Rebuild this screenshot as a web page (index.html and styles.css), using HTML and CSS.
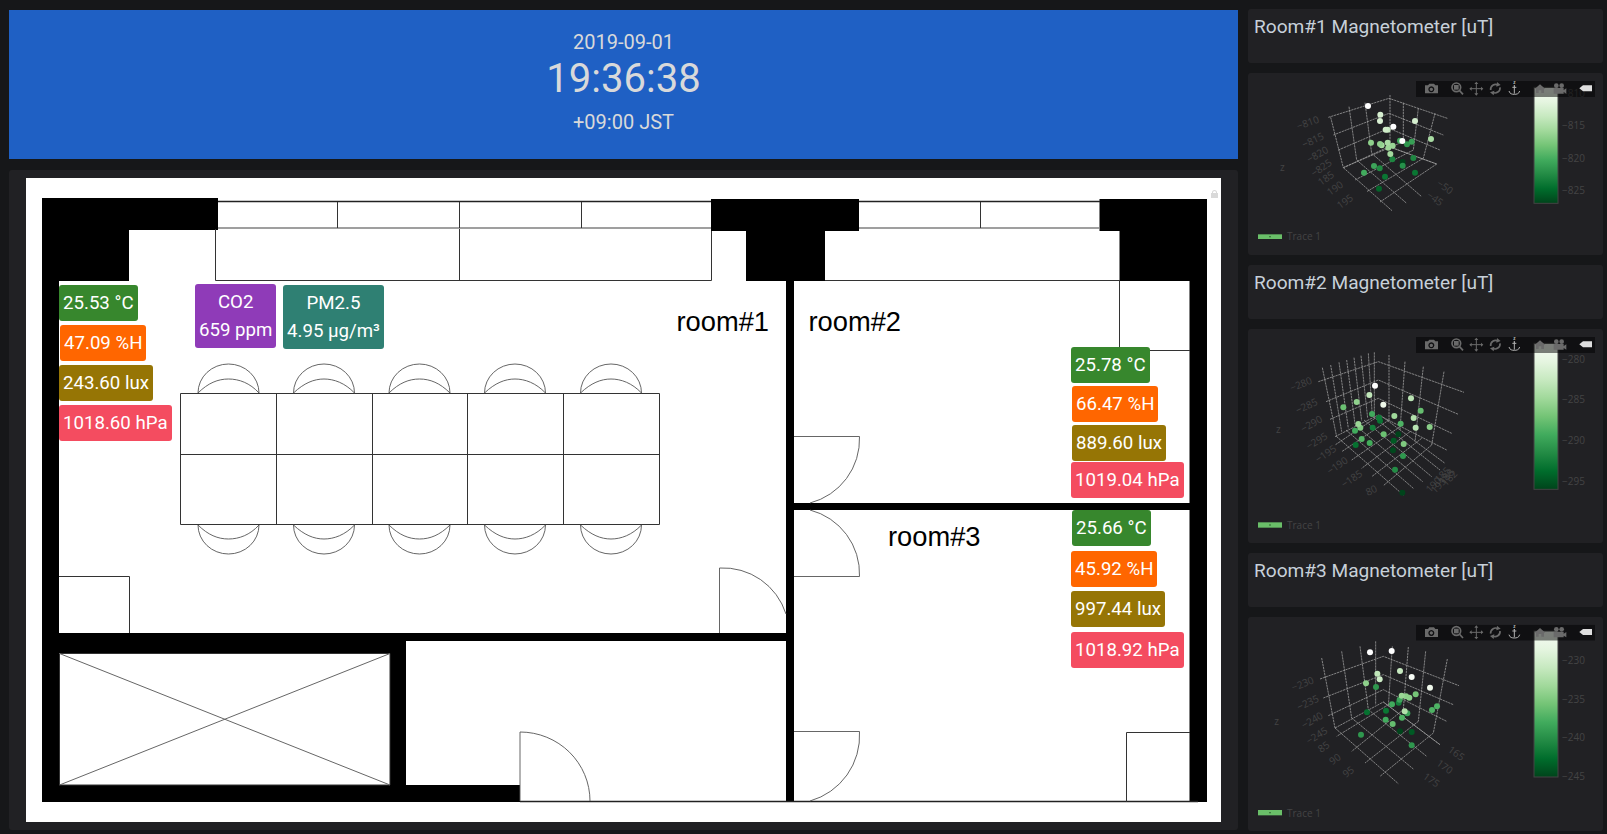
FILE: index.html
```html
<!DOCTYPE html>
<html lang="en">
<head>
<meta charset="utf-8">
<title>Dashboard</title>
<link rel="stylesheet" href="styles.css">
</head>
<body>
<svg class="defs" width="0" height="0" aria-hidden="true">
  <defs>
    <linearGradient id="greens" x1="0" y1="0" x2="0" y2="1">
      <stop offset="0" stop-color="#f7fcf5"/>
      <stop offset=".125" stop-color="#e5f5e0"/>
      <stop offset=".25" stop-color="#c7e9c0"/>
      <stop offset=".375" stop-color="#a1d99b"/>
      <stop offset=".5" stop-color="#74c476"/>
      <stop offset=".625" stop-color="#41ab5d"/>
      <stop offset=".75" stop-color="#238b45"/>
      <stop offset=".875" stop-color="#006d2c"/>
      <stop offset="1" stop-color="#00441b"/>
    </linearGradient>
    <symbol id="toolbar" viewBox="0 0 537 48" width="537" height="48">
      <rect width="537" height="48" fill="#000" fill-opacity=".5"/>
      <path class="ico" fill-rule="evenodd" d="M27 13h9l4-5h14l4 5h8v24H27zM46 16a9 9 0 1 0 .01 0zM46 20a5 5 0 1 1-.01 0z"/>
      <circle class="ico-line" cx="121" cy="19" r="13"/>
      <rect class="ico" x="114" y="12" width="14" height="14"/>
      <path class="ico-line" d="M130 28l11 12"/>
      <path class="ico-line thin" d="M181 5v36M163 23h36"/>
      <path class="ico" d="M181 2l6 7h-12zM181 44l6-7h-12zM160 23l7-6v12zM202 23l-7-6v12z"/>
      <path class="ico-line" d="M224 27a15 15 0 0 1 22-15M252 19a15 15 0 0 1-22 15"/>
      <path class="ico" d="M243 3l11 9-13 5zM233 43l-11-9 13-5z"/>
      <text class="ico-z" x="295" y="10">z</text>
      <path class="anchor" d="M295 13v25M289 19h12M279 30c2 9 10 10 16 10s14-1 16-10"/>
      <circle class="anchor-hub" cx="295" cy="15" r="2"/>
      <path class="ico" d="M372 10l16 14h-4v12h-8v-8h-8v8h-8V24h-4z"/>
      <circle class="ico" cx="421" cy="14" r="7"/>
      <circle class="ico" cx="437" cy="14" r="7"/>
      <path class="ico" d="M413 21h30v6l8-5v16l-8-5v5h-30z"/>
      <path class="tag" d="M490 22l11-9h27v18h-27z"/>
    </symbol>
  </defs>
</svg>

<div class="dash">
  <div class="col-left">
    <section class="panel clock">
      <div class="clock-date">2019-09-01</div>
      <div class="clock-time">19:36:38</div>
      <div class="clock-zone">+09:00 JST</div>
    </section>

    <section class="panel floor-panel">
      <div class="floor">
        <svg class="plan" viewBox="26 178 1195 644" width="1195" height="644">
          <path class="wall" d="M42 198H218V230H129V281H59V802H42Z"/>
          <path class="wall" d="M711 199H859V231H825V281H794V802H786V281H746V231H711Z"/>
          <path class="wall" d="M1099.500 199H1207V802H1189.500V281H1119.500V231H1099.500Z"/>
          <rect class="wall" x="794" y="503" width="396" height="7"/>
          <path class="wall" d="M59 633H786V641H406V785H520V802H42V785H390V653H59Z"/>

          <path class="ln-dark" d="M218 201.500H711M859 201.500H1100M520 801.500H1198"/>
          <path class="ln-gray" d="M218 228H711M859 228H1100"/>
          <path class="ln" d="M337.500 202V228M459.500 202V228M581.500 202V228M980.500 202V228"/>
          <path class="ln" d="M215.500 229V280.500H711.500V231M459.500 229V280.500"/>
          <path class="ln" d="M825 280.500H1120M1119.500 281V350.500H1190"/>
          <path class="ln" d="M59 576.500H129.500V633"/>
          <path class="ln" d="M1126.500 802V732.500H1190"/>
          <path class="ln" d="M180.500 393.500H659.500V524.500H180.500ZM180.500 454.500H659.500M276.500 393.500V524.500M372.500 393.500V524.500M467.500 393.500V524.500M563.500 393.500V524.500"/>

          <g class="arc">
            <path d="M198 393A30.500 29 0 0 1 259 393M198 393C208 383 218 379 228.500 379S250 383 259 393"/>
            <path d="M293.500 393A30.500 29 0 0 1 354.500 393M293.500 393C304 383 314 379 324 379S345 383 354.500 393"/>
            <path d="M389 393A30.500 29 0 0 1 450 393M389 393C399 383 409 379 419.500 379S440 383 450 393"/>
            <path d="M484.500 393A30.500 29 0 0 1 545.500 393M484.500 393C495 383 505 379 515 379S536 383 545.500 393"/>
            <path d="M580.500 393A30.500 29 0 0 1 641.500 393M580.500 393C591 383 601 379 611 379S632 383 641.500 393"/>
            <path d="M198 525A30.500 29 0 0 0 259 525M198 525C208 535 218 539 228.500 539S250 535 259 525"/>
            <path d="M293.500 525A30.500 29 0 0 0 354.500 525M293.500 525C304 535 314 539 324 539S345 535 354.500 525"/>
            <path d="M389 525A30.500 29 0 0 0 450 525M389 525C399 535 409 539 419.500 539S440 535 450 525"/>
            <path d="M484.500 525A30.500 29 0 0 0 545.500 525M484.500 525C495 535 505 539 515 539S536 535 545.500 525"/>
            <path d="M580.500 525A30.500 29 0 0 0 641.500 525M580.500 525C591 535 601 539 611 539S632 535 641.500 525"/>
            <path d="M794 436.500H859.500A66 66 0 0 1 810 503"/>
            <path d="M794 576.500H859.500A66 66 0 0 0 810 510"/>
            <path d="M794 731.500H859.500A68 68 0 0 1 810 801"/>
            <path d="M719.500 633V568A66 66 0 0 1 786 614"/>
            <path d="M520 801V732A70 69 0 0 1 590 801"/>
          </g>

          <path class="ln" d="M59.500 653.500H390V785H59.500Z"/>
          <path class="ln-diag" d="M59.500 653.500L390 785M390 653.500L59.500 785"/>

          <text class="room" x="676.500" y="331">room#1</text>
          <text class="room" x="808.500" y="331">room#2</text>
          <text class="room" x="888" y="546">room#3</text>

          <path class="lock" d="M1212 193v-.5a2.500 2.500 0 0 1 5 0v.5h1v5h-7v-5zM1213 193h3v-.5a1.500 1.500 0 0 0-3 0z"/>
        </svg>

        <div class="tag-pin t-green r1-t">25.53 °C</div>
        <div class="tag-pin t-orange r1-h">47.09 %H</div>
        <div class="tag-pin t-olive r1-l">243.60 lux</div>
        <div class="tag-pin t-red r1-p">1018.60 hPa</div>
        <div class="tag-pin two t-purple r1-c">CO2<br>659 ppm</div>
        <div class="tag-pin two t-teal r1-m">PM2.5<br>4.95 µg/m³</div>

        <div class="tag-pin t-green r2-t">25.78 °C</div>
        <div class="tag-pin t-orange r2-h">66.47 %H</div>
        <div class="tag-pin t-olive r2-l">889.60 lux</div>
        <div class="tag-pin t-red r2-p">1019.04 hPa</div>

        <div class="tag-pin t-green r3-t">25.66 °C</div>
        <div class="tag-pin t-orange r3-h">45.92 %H</div>
        <div class="tag-pin t-olive r3-l">997.44 lux</div>
        <div class="tag-pin t-red r3-p">1018.92 hPa</div>
      </div>
    </section>
  </div>

  <div class="col-right">
    <section class="panel title-panel"><h2 class="title">Room#1 Magnetometer [uT]</h2></section>
    <section class="panel plot plot-short">
      <svg viewBox="24 219 1065 546" width="355" height="182">
        <g class="grid">
          <path d="M265 352L447 295L622 355M280 405L447 340L610 405M295 450L447 385L600 450M310 503L447 440L590 492"/>
          <path d="M272 352L310 503M327 320L350 480M375 308L395 460M450 285L450 440M490 308L490 425M535 325L520 450M585 340L550 475"/>
          <path d="M310 503L456 632M350 480L500 610M395 460L545 590M447 440L590 492M590 492L420 606M550 475L380 575M520 450L345 540M490 425L310 503"/>
        </g>
        <g class="dots">
          <circle cx="417" cy="566" fill="#036429"/><circle cx="435" cy="530" fill="#0a7633"/><circle cx="525" cy="518" fill="#0a7633"/>
          <circle cx="372" cy="518" fill="#41ab5d"/><circle cx="419" cy="505" fill="#1f8a42"/><circle cx="402" cy="498" fill="#3da35a"/>
          <circle cx="488" cy="486" fill="#00441b"/><circle cx="488" cy="497" fill="#25924a"/><circle cx="520" cy="474" fill="#1e8742"/>
          <circle cx="457" cy="478" fill="#1d8640"/><circle cx="451" cy="462" fill="#a5db9f"/><circle cx="501" cy="433" fill="#2f974e"/>
          <circle cx="480" cy="422" fill="#41ab5d"/><circle cx="515" cy="425" fill="#37a055"/><circle cx="458" cy="437" fill="#99d595"/>
          <circle cx="445" cy="443" fill="#9ed798"/><circle cx="425" cy="436" fill="#a5db9f"/><circle cx="420" cy="432" fill="#90d18d"/>
          <circle cx="443" cy="428" fill="#a9dca3"/><circle cx="393" cy="428" fill="#8ed08b"/><circle cx="487" cy="423" fill="#fff"/>
          <circle cx="573" cy="417" fill="#a9dca3"/><circle cx="443" cy="389" fill="#c7e9c0"/><circle cx="437" cy="389" fill="#d0edc9"/>
          <circle cx="460" cy="380" fill="#fff"/><circle cx="525" cy="363" fill="#d5efcf"/><circle cx="420" cy="363" fill="#d9f0d3"/>
          <circle cx="421" cy="344" fill="#d6efd0"/><circle cx="384" cy="318" fill="#fff"/>
        </g>
        <g class="tick">
          <text transform="translate(175 390) rotate(-20)">−810</text>
          <text transform="translate(192 445) rotate(-25)">−815</text>
          <text transform="translate(208 490) rotate(-30)">−820</text>
          <text transform="translate(222 532) rotate(-35)">−825</text>
          <text transform="translate(243 558) rotate(-35)">185</text>
          <text transform="translate(270 588) rotate(-35)">190</text>
          <text transform="translate(300 628) rotate(-35)">195</text>
          <text x="120" y="514">z</text>
          <text transform="translate(588 555) rotate(35)">−50</text>
          <text transform="translate(558 590) rotate(35)">−45</text>
          <text x="966" y="292">−810</text><text x="966" y="387">−815</text><text x="966" y="485">−820</text><text x="966" y="581">−825</text>
          <text x="141" y="720">Trace 1</text>
        </g>
        <rect class="bar" x="882" y="262" width="72" height="348"/>
        <use href="#toolbar" x="528" y="243"/>
        <rect class="leg" x="54" y="703" width="72" height="14"/><rect class="leg-dot" x="88" y="708" width="4" height="4"/>
      </svg>
    </section>

    <section class="panel title-panel"><h2 class="title">Room#2 Magnetometer [uT]</h2></section>
    <section class="panel plot">
      <svg viewBox="24 27 1065 642" width="355" height="214">
        <g class="grid">
          <path d="M235 185L415 125L672 217M258 245L415 180L655 283M270 298L415 235L635 340M285 350L415 285L620 390"/>
          <path d="M247 143L290 350M272 135L305 335M297 127L325 325M320 120L345 312M342 113L365 302M363 107L383 295M385 100L397 290M403 97L403 290M447 105L447 300M495 125L480 330M550 140L525 365M612 155L575 375"/>
          <path d="M290 350L490 525M318 330L520 505M345 315L548 485M372 300L575 470M400 290L600 450M420 285L615 430M575 375L430 497M545 355L395 470M510 335L365 445M480 320L335 420M447 300L305 395M420 285L285 375"/>
        </g>
        <g class="dots">
          <circle cx="487" cy="518" fill="#00441b"/><circle cx="465" cy="449" fill="#238b45"/><circle cx="489" cy="408" fill="#2f974e"/>
          <circle cx="459" cy="391" fill="#00481d"/><circle cx="491" cy="372" fill="#7fc97f"/><circle cx="347" cy="375" fill="#067230"/>
          <circle cx="389" cy="369" fill="#42ac5a"/><circle cx="461" cy="362" fill="#005a24"/><circle cx="365" cy="357" fill="#56b567"/>
          <circle cx="475" cy="343" fill="#00441b"/><circle cx="431" cy="343" fill="#6bc072"/><circle cx="569" cy="321" fill="#8ace88"/>
          <circle cx="527" cy="323" fill="#b8e3b2"/><circle cx="398" cy="323" fill="#137e3a"/><circle cx="345" cy="332" fill="#41ab5d"/>
          <circle cx="361" cy="323" fill="#80ca80"/><circle cx="355" cy="312" fill="#9bd696"/><circle cx="482" cy="311" fill="#4eb264"/>
          <circle cx="420" cy="302" fill="#0a7433"/><circle cx="521" cy="294" fill="#b2e0ab"/><circle cx="417" cy="293" fill="#0f7b38"/>
          <circle cx="463" cy="288" fill="#a0d99b"/><circle cx="396" cy="282" fill="#41ab5d"/><circle cx="542" cy="272" fill="#66bd6f"/>
          <circle cx="310" cy="262" fill="#6abf71"/><circle cx="430" cy="254" fill="#eef8ea"/><circle cx="350" cy="246" fill="#90d18d"/>
          <circle cx="513" cy="235" fill="#bbe4b4"/><circle cx="388" cy="225" fill="#c0e6b9"/><circle cx="405" cy="197" fill="#fff"/>
        </g>
        <g class="tick">
          <text transform="translate(155 215) rotate(-22)">−280</text>
          <text transform="translate(173 282) rotate(-25)">−285</text>
          <text transform="translate(190 338) rotate(-30)">−290</text>
          <text transform="translate(207 390) rotate(-32)">−295</text>
          <text transform="translate(235 430) rotate(-35)">−195</text>
          <text transform="translate(270 465) rotate(-35)">−190</text>
          <text transform="translate(313 505) rotate(-35)">−185</text>
          <text x="108" y="340">z</text>
          <text transform="translate(383 528) rotate(-25)">80</text>
          <text transform="translate(597 490) rotate(-45)">185</text>
          <text transform="translate(608 496) rotate(-45)">188</text>
          <text transform="translate(618 500) rotate(-45)">182</text>
          <text transform="translate(570 520) rotate(-45)">190</text>
          <text transform="translate(585 522) rotate(-45)">193</text>
          <text x="966" y="128">−280</text><text x="966" y="249">−285</text><text x="966" y="371">−290</text><text x="966" y="494">−295</text>
          <text x="141" y="628">Trace 1</text>
        </g>
        <rect class="bar" x="882" y="70" width="72" height="438"/>
        <use href="#toolbar" x="528" y="51"/>
        <rect class="leg" x="54" y="607" width="72" height="16"/><rect class="leg-dot" x="88" y="613" width="4" height="4"/>
      </svg>
    </section>

    <section class="panel title-panel"><h2 class="title">Room#3 Magnetometer [uT]</h2></section>
    <section class="panel plot">
      <svg viewBox="24 22 1065 642" width="355" height="214">
        <g class="grid">
          <path d="M240 208L430 140L657 228M250 265L430 195L640 285M265 318L430 240L620 335M285 355L430 277L600 405"/>
          <path d="M245 145L285 355M305 125L335 325M360 110L385 300M407 95L407 285M457 110L445 290M505 112L490 300M557 125L535 335M622 148L580 370"/>
          <path d="M285 355L475 522M335 325L520 478M385 300L560 440M430 277L600 405M580 370L420 500M535 335L375 460M490 300L335 425M445 285L290 380"/>
        </g>
        <g class="dots">
          <circle cx="515" cy="407" fill="#2f974e"/><circle cx="363" cy="375" fill="#2f974e"/><circle cx="515" cy="367" fill="#005a24"/>
          <circle cx="480" cy="365" fill="#00441b"/><circle cx="458" cy="343" fill="#66bd6f"/><circle cx="437" cy="330" fill="#41ab5d"/>
          <circle cx="502" cy="311" fill="#3da35a"/><circle cx="486" cy="324" fill="#4eb264"/><circle cx="494" cy="305" fill="#b2e0ab"/>
          <circle cx="438" cy="303" fill="#0a7633"/><circle cx="381" cy="308" fill="#067230"/><circle cx="576" cy="301" fill="#4eb264"/>
          <circle cx="591" cy="290" fill="#4eb264"/><circle cx="456" cy="284" fill="#41ab5d"/><circle cx="476" cy="279" fill="#157f3b"/>
          <circle cx="479" cy="270" fill="#3da35a"/><circle cx="498" cy="260" fill="#8dd08a"/><circle cx="508" cy="264" fill="#8dd08a"/>
          <circle cx="485" cy="258" fill="#9bd696"/><circle cx="527" cy="254" fill="#74c476"/><circle cx="570" cy="234" fill="#f0f9ec"/>
          <circle cx="408" cy="232" fill="#2f974e"/><circle cx="378" cy="221" fill="#8ed08b"/><circle cx="419" cy="209" fill="#cdecc7"/>
          <circle cx="412" cy="192" fill="#c0e6b9"/><circle cx="515" cy="202" fill="#f7fcf5"/><circle cx="480" cy="184" fill="#c7e9c0"/>
          <circle cx="390" cy="128" fill="#fff"/><circle cx="455" cy="124" fill="#fff"/>
        </g>
        <g class="tick">
          <text transform="translate(160 245) rotate(-22)">−230</text>
          <text transform="translate(177 303) rotate(-25)">−235</text>
          <text transform="translate(192 358) rotate(-30)">−240</text>
          <text transform="translate(207 405) rotate(-32)">−245</text>
          <text transform="translate(243 430) rotate(-35)">85</text>
          <text transform="translate(277 467) rotate(-35)">90</text>
          <text transform="translate(317 505) rotate(-35)">95</text>
          <text x="103" y="345">z</text>
          <text transform="translate(622 425) rotate(35)">165</text>
          <text transform="translate(587 465) rotate(35)">170</text>
          <text transform="translate(547 505) rotate(35)">175</text>
          <text x="966" y="164">−230</text><text x="966" y="281">−235</text><text x="966" y="395">−240</text><text x="966" y="512">−245</text>
          <text x="141" y="622">Trace 1</text>
        </g>
        <rect class="bar" x="882" y="64" width="72" height="438"/>
        <use href="#toolbar" x="528" y="45"/>
        <rect class="leg" x="54" y="601" width="72" height="16"/><rect class="leg-dot" x="88" y="607" width="4" height="4"/>
      </svg>
    </section>
  </div>
</div>
</body>
</html>
```

FILE: styles.css
```css
html, body {
  margin: 0;
  height: 100%;
  background: #161719;
  overflow: hidden;
}
body {
  font-family: Roboto, "Liberation Sans", sans-serif;
  color: #d8d9da;
}
.defs { position: absolute; }

.dash {
  display: grid;
  grid-template-columns: 1229px 355px;
  column-gap: 10px;
  padding: 9px 0 0 9px;
}
.col-left {
  display: flex;
  flex-direction: column;
  gap: 11px;
  padding-top: 1px;
}
.col-right {
  display: flex;
  flex-direction: column;
  gap: 10px;
}
.panel {
  background: #212124;
  border-radius: 3px;
  box-sizing: border-box;
}

/* Clock */
.clock {
  background: #1f60c4;
  height: 149px;
  display: flex;
  flex-direction: column;
  align-items: center;
  text-align: center;
  border-radius: 0;
}
.clock-date {
  font-size: 20px;
  line-height: 22px;
  margin-top: 21px;
}
.clock-time {
  font-size: 40px;
  line-height: 47px;
  margin-top: 2px;
}
.clock-zone {
  font-size: 20px;
  line-height: 22px;
  margin-top: 9px;
}

/* Floor plan */
.floor-panel {
  height: 660px;
  padding: 8px 17px;
}
.floor {
  position: relative;
  width: 1195px;
  height: 644px;
  background: #fff;
}
.plan { display: block; }
.wall { fill: #000; }
.ln, .ln-dark, .ln-gray, .ln-diag, .arc path { fill: none; }
.ln { stroke: #333; stroke-width: 1; }
.ln-dark { stroke: #222; stroke-width: 1.6; }
.ln-gray { stroke: #808080; stroke-width: 1.6; }
.ln-diag { stroke: #666; stroke-width: 1; }
.arc path { stroke: #555; stroke-width: .9; }
.room {
  font-family: "Liberation Sans", Arial, sans-serif;
  font-size: 27.3px;
  fill: #000;
}
.lock { fill: #d9d9d9; fill-rule: evenodd; }

.tag-pin {
  position: absolute;
  box-sizing: border-box;
  height: 36px;
  padding: 0 4px;
  font-size: 18.67px;
  line-height: 36px;
  color: #fff;
  border-radius: 3px;
  white-space: nowrap;
}
.two {
  height: 64px;
  padding: 4px;
  line-height: 28px;
  text-align: center;
}
.t-green { background: #37872d; }
.t-orange { background: #ff6600; }
.t-olive { background: #967505; }
.t-red { background: #f44c60; }
.t-purple { background: #8f3bb8; }
.t-teal { background: #2f8073; }

.r1-t { left: 33px; top: 107px; }
.r1-h { left: 34px; top: 147px; }
.r1-l { left: 33px; top: 187px; }
.r1-p { left: 33px; top: 227px; }
.r1-c { left: 169px; top: 106px; }
.r1-m { left: 257px; top: 107px; }
.r2-t { left: 1045px; top: 169px; }
.r2-h { left: 1046px; top: 208px; }
.r2-l { left: 1046px; top: 247px; }
.r2-p { left: 1045px; top: 284px; }
.r3-t { left: 1046px; top: 332px; }
.r3-h { left: 1045px; top: 373px; }
.r3-l { left: 1045px; top: 413px; }
.r3-p { left: 1045px; top: 454px; }

/* Right column */
.title-panel {
  height: 54px;
  padding: 5px 6px;
}
.title {
  margin: 0;
  font-size: 19.1px;
  font-weight: 400;
  line-height: 26px;
  color: #c7d0d9;
  white-space: nowrap;
}
.plot { height: 214px; overflow: hidden; }
.plot-short { height: 182px; }
.plot svg { display: block; }

.grid path {
  fill: none;
  stroke: #9c9c9c;
  stroke-width: 2.4;
  stroke-dasharray: 7 2;
}
.dots circle { r: 9px; }
.tick text {
  font-family: "Open Sans", "Liberation Sans", sans-serif;
  font-size: 30px;
  fill: #444;
}
.bar {
  fill: url(#greens);
  stroke: #444;
  stroke-width: 3;
}
.leg { fill: #6abf69; }
.leg-dot { fill: #2a5a2a; }

.ico { fill: #6a6a6a; }
.ico-line {
  fill: none;
  stroke: #6a6a6a;
  stroke-width: 5;
}
.ico-line.thin { stroke-width: 3; }
.ico-z {
  font-family: "Open Sans", sans-serif;
  font-size: 14px;
  font-weight: 700;
  fill: #b0b0b0;
  text-anchor: middle;
}
.anchor {
  fill: none;
  stroke: #b0b0b0;
  stroke-width: 3;
}
.anchor-hub { fill: #b0b0b0; }
.tag { fill: #dedede; }
```
